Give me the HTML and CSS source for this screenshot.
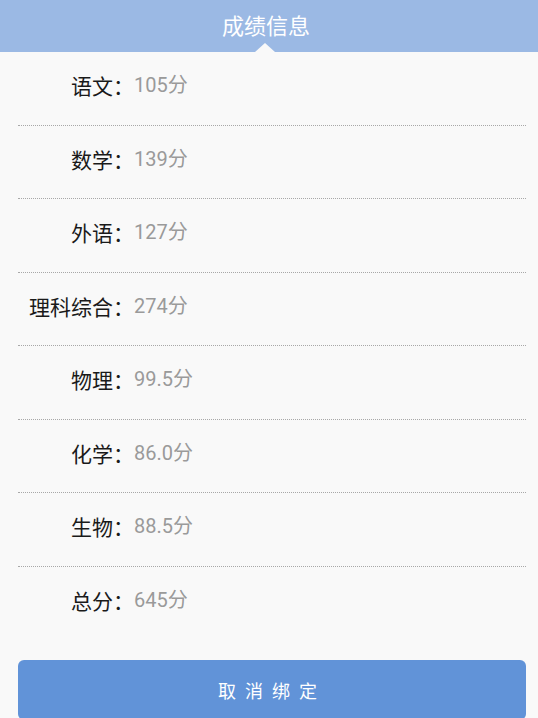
FILE: index.html
```html
<!DOCTYPE html>
<html lang="zh-CN">
<head>
<meta charset="utf-8">
<title>成绩信息</title>
<link rel="stylesheet" href="styles.css">
</head>
<body>
<header class="top-bar">
  <h1 class="title">成绩信息</h1>
  <span class="pointer"></span>
</header>
<main class="score-list">
  <div class="row"><span class="label">语文：</span><span class="value">105分</span></div>
  <div class="row"><span class="label">数学：</span><span class="value">139分</span></div>
  <div class="row"><span class="label">外语：</span><span class="value">127分</span></div>
  <div class="row"><span class="label">理科综合：</span><span class="value">274分</span></div>
  <div class="row"><span class="label">物理：</span><span class="value">99.5分</span></div>
  <div class="row"><span class="label">化学：</span><span class="value">86.0分</span></div>
  <div class="row"><span class="label">生物：</span><span class="value">88.5分</span></div>
  <div class="row last"><span class="label">总分：</span><span class="value">645分</span></div>
</main>
<div class="actions">
  <button class="unbind-btn" type="button">取消绑定</button>
</div>
</body>
</html>
```

FILE: styles.css
```css
html, body {
  margin: 0;
  padding: 0;
  background: #f9f9f9;
  font-family: "Noto Sans CJK SC", "Noto Sans", sans-serif;
}

.top-bar {
  position: relative;
  height: 52px;
  background: #9bb9e4;
  display: flex;
  align-items: center;
  justify-content: center;
}

.title {
  margin: 0 6px 5px 0;
  font-size: 22px;
  font-weight: 400;
  color: #ffffff;
  line-height: 30px;
}

.pointer {
  position: absolute;
  left: 255px;
  bottom: 0;
  width: 0;
  height: 0;
  border-left: 10px solid transparent;
  border-right: 10px solid transparent;
  border-bottom: 9px solid #f9f9f9;
}

.score-list {
  margin: 0 12px 0 18px;
  display: flex;
  flex-direction: column;
}

.row {
  display: flex;
  align-items: center;
  height: 72.5px;
  box-sizing: content-box;
  border-bottom: 1px dotted #a8a8a8;
}

.row .label,
.row .value {
  position: relative;
  top: -3px;
}

.row.last {
  border-bottom: none;
}

.label {
  width: 116px;
  text-align: right;
  font-size: 21px;
  color: #1a1a1a;
  line-height: 30px;
  white-space: nowrap;
}

.value {
  font-family: Roboto, "Noto Sans CJK SC", sans-serif;
  font-size: 20px;
  color: #9a9a9a;
  line-height: 30px;
}

.actions {
  padding: 21px 12px 0 18px;
}

.unbind-btn {
  display: block;
  width: 100%;
  height: 60px;
  border: none;
  border-radius: 6px;
  background: #6193d8;
  color: #ffffff;
  font-family: "Noto Sans CJK SC", sans-serif;
  font-size: 18px;
  letter-spacing: 9px;
  padding: 0;
  margin: 0;
  line-height: 58px;
}
```
